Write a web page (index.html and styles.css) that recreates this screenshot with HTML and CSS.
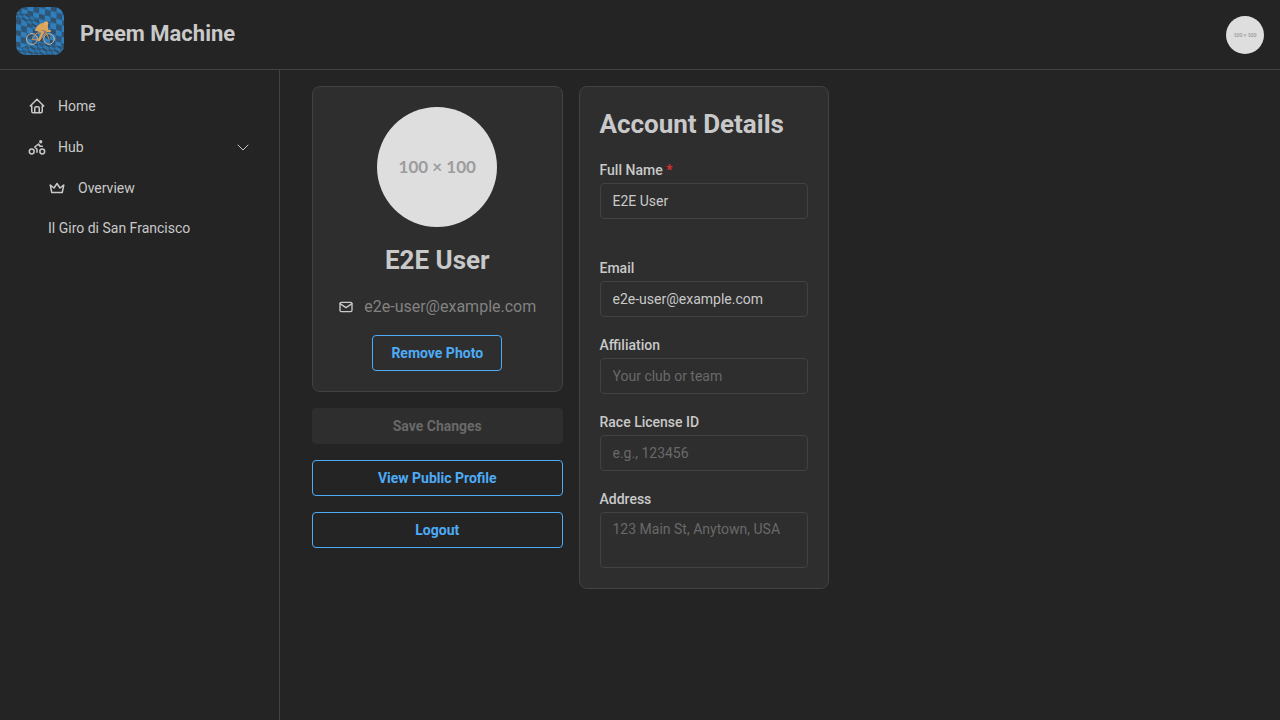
FILE: index.html
```
<!DOCTYPE html>
<html lang="en">
<head>
<meta charset="utf-8">
<title>Preem Machine</title>
<link rel="stylesheet" href="styles.css">
</head>
<body>
<header class="header">
  <div class="brand">
    <a class="logo-link" href="#" aria-label="Preem Machine home">
      <svg class="logo" viewBox="0 0 48 48" aria-hidden="true">
        <defs>
          <pattern id="checks" width="12" height="11" patternUnits="userSpaceOnUse" patternTransform="rotate(16) skewX(14)">
            <rect width="12" height="11" fill="#2f7fbd"/>
            <rect width="6" height="5" fill="#30526f"/>
            <rect x="6" y="5" width="6" height="6" fill="#2d567a"/>
          </pattern>
          <pattern id="ripples" width="11" height="5" patternUnits="userSpaceOnUse" patternTransform="rotate(32)">
            <rect width="11" height="5" fill="#2d77b0"/>
            <rect width="6" height="2" fill="#2d4d68"/>
            <rect x="6" y="2" width="5" height="3" fill="#2d5a80"/>
          </pattern>
        </defs>
        <rect width="48" height="48" fill="url(#checks)"/>
        <path d="M0 4Q12 6 20 12T28 22Q24 24 18 20T0 12Z" fill="url(#ripples)"/>
        <path d="M0 44Q14 35 25 36T48 40V48H0Z" fill="url(#ripples)"/>
        <g fill="none" stroke="#c9b394" stroke-width="1">
          <circle cx="16" cy="32" r="5.5"/>
          <circle cx="33" cy="32" r="5.3"/>
          <path d="M16 32l5-6h9l-6 7zM30 25l3 7M28 24h6" stroke="#d08a50"/>
        </g>
        <path d="M20 23q2-5 7-6l4 2 0 5 3 0" fill="#dca45c" stroke="#dca45c"/>
        <circle cx="30" cy="16.5" r="2.3" fill="#e3ae64"/>
        <path d="M21 23l6 2-2 4-2 4" fill="none" stroke="#dca45c" stroke-width="2.2"/>
      </svg>
    </a>
    <h1 class="brand-name">Preem Machine</h1>
  </div>
  <button class="avatar avatar-small" type="button" aria-label="Account">100 × 100</button>
</header>
<div class="shell">
  <nav class="nav">
    <a class="nav-link" href="#">
      <svg class="nav-icon" viewBox="0 0 24 24" aria-hidden="true"><path d="M5 12H3l9-9 9 9h-2M5 12v7a2 2 0 0 0 2 2h10a2 2 0 0 0 2-2v-7M9 21v-6a2 2 0 0 1 2-2h2a2 2 0 0 1 2 2v6"/></svg>
      <span>Home</span>
    </a>
    <a class="nav-link" href="#" aria-expanded="true">
      <svg class="nav-icon" viewBox="0 0 24 24" aria-hidden="true"><circle cx="5" cy="18" r="3.2"/><circle cx="19" cy="18" r="3.2"/><path d="M12 19v-4l-3-3 5-4 2 3h3"/><circle cx="17" cy="5" r="1.2" fill="currentColor"/></svg>
      <span>Hub</span>
      <svg class="chevron" viewBox="0 0 16 16" aria-hidden="true"><path d="M3 6l5 5 5-5"/></svg>
    </a>
    <div class="nav-children">
      <a class="nav-link" href="#">
        <svg class="nav-icon" viewBox="0 0 24 24" aria-hidden="true"><path d="M12 6l4 6 5-4-2 10H5L3 8l5 4z"/></svg>
        <span>Overview</span>
      </a>
      <a class="nav-link" href="#">Il Giro di San Francisco</a>
    </div>
  </nav>
  <main class="main">
    <form class="columns">
      <div class="column">
        <section class="card profile">
          <div class="avatar avatar-large" role="img" aria-label="Profile photo">100 × 100</div>
          <h2 class="title">E2E User</h2>
          <div class="email">
            <svg class="mail-icon" viewBox="0 0 24 24" aria-hidden="true"><rect x="3" y="5" width="18" height="14" rx="2"/><path d="M3 7l9 6 9-6"/></svg>
            <span>e2e-user@example.com</span>
          </div>
          <button class="button" type="button">Remove Photo</button>
        </section>
        <button class="button" type="submit" disabled>Save Changes</button>
        <button class="button" type="button">View Public Profile</button>
        <button class="button" type="button">Logout</button>
      </div>
      <section class="card details">
        <h2 class="title">Account Details</h2>
        <div class="field field-name">
          <label for="name">Full Name <span class="required">*</span></label>
          <input id="name" type="text" value="E2E User">
        </div>
        <div class="field">
          <label for="email">Email</label>
          <input id="email" type="email" value="e2e-user@example.com">
        </div>
        <div class="field">
          <label for="affiliation">Affiliation</label>
          <input id="affiliation" type="text" placeholder="Your club or team">
        </div>
        <div class="field">
          <label for="license">Race License ID</label>
          <input id="license" type="text" placeholder="e.g., 123456">
        </div>
        <div class="field">
          <label for="address">Address</label>
          <textarea id="address" placeholder="123 Main St, Anytown, USA"></textarea>
        </div>
      </section>
    </form>
  </main>
</div>
</body>
</html>
```
FILE: styles.css
```
* { box-sizing: border-box; }

body {
  margin: 0;
  min-height: 100vh;
  display: flex;
  flex-direction: column;
  background: #242424;
  color: #c9c9c9;
  font: 16px/25px Roboto, sans-serif;
}

h1, h2 { margin: 0; font-weight: 700; }

svg {
  fill: none;
  stroke: currentColor;
  stroke-width: 2;
  stroke-linecap: round;
  stroke-linejoin: round;
  flex: none;
}

.header {
  display: flex;
  align-items: center;
  justify-content: space-between;
  height: 70px;
  padding: 0 16px;
  border-bottom: 1px solid #424242;
}

.brand { display: flex; align-items: center; gap: 16px; }
.logo-link { padding-bottom: 8px; }
.logo { display: block; width: 48px; height: 48px; border-radius: 10px; stroke: none; }
.brand-name { font-size: 22px; line-height: 30px; padding-bottom: 2px; }

.avatar {
  display: flex;
  align-items: center;
  justify-content: center;
  padding: 0;
  border: 0;
  border-radius: 50%;
  background: #dedede;
  color: #9c9c9c;
  font-family: Lato, sans-serif;
  font-weight: 700;
  line-height: 24px;
  white-space: nowrap;
}
.avatar-small { width: 38px; height: 38px; font-size: 5px; }
.avatar-large { width: 120px; height: 120px; font-size: 17px; }

.shell { display: flex; flex: 1; }

.nav { width: 280px; flex: none; padding: 16px; border-right: 1px solid #424242; }
.nav, .nav-children { display: flex; flex-direction: column; gap: 1px; }
.nav-link {
  display: flex;
  align-items: center;
  gap: 12px;
  padding: 8px 12px;
  color: inherit;
  font-size: 14px;
  line-height: 24px;
  text-decoration: none;
}
.nav-icon { width: 18px; height: 18px; }
.chevron { width: 16px; height: 16px; margin-left: auto; stroke-width: 1; }
.nav .nav-children { padding-left: 20px; gap: 0; }

.main { flex: 1; padding: 16px 32px; }
.columns {
  display: grid;
  grid-template-columns: repeat(2, minmax(0, 1fr));
  align-items: start;
  gap: 16px;
  max-width: 517px;
}
.column { display: flex; flex-direction: column; gap: 16px; }

.card {
  display: flex;
  flex-direction: column;
  gap: 16px;
  padding: 20px;
  border: 1px solid #424242;
  border-radius: 8px;
  background: #2e2e2e;
}
.profile { align-items: center; }
.title { font-size: 26px; line-height: 35px; }
.email { display: flex; align-items: center; gap: 10px; color: #828282; }
.mail-icon { width: 16px; height: 16px; color: #c9c9c9; }

.button {
  height: 36px;
  padding: 0 18px;
  border: 1px solid #4dabf7;
  border-radius: 4px;
  background: transparent;
  color: #4dabf7;
  font: 700 14px/20px Roboto, sans-serif;
}
.button:disabled { border-color: #2e2e2e; background: #2e2e2e; color: #696969; }

.field { display: flex; flex-direction: column; }
.field-name { margin-bottom: 21px; }
.field label { font-size: 14px; font-weight: 500; }
.required { color: #e03131; }

input, textarea {
  width: 100%;
  height: 36px;
  padding: 0 12px;
  border: 1px solid #424242;
  border-radius: 4px;
  background: #2e2e2e;
  color: #c9c9c9;
  font: 14px/22px Roboto, sans-serif;
}
textarea { height: 56px; padding: 5px 12px; resize: none; }
::placeholder { color: #696969; opacity: 1; }
```
